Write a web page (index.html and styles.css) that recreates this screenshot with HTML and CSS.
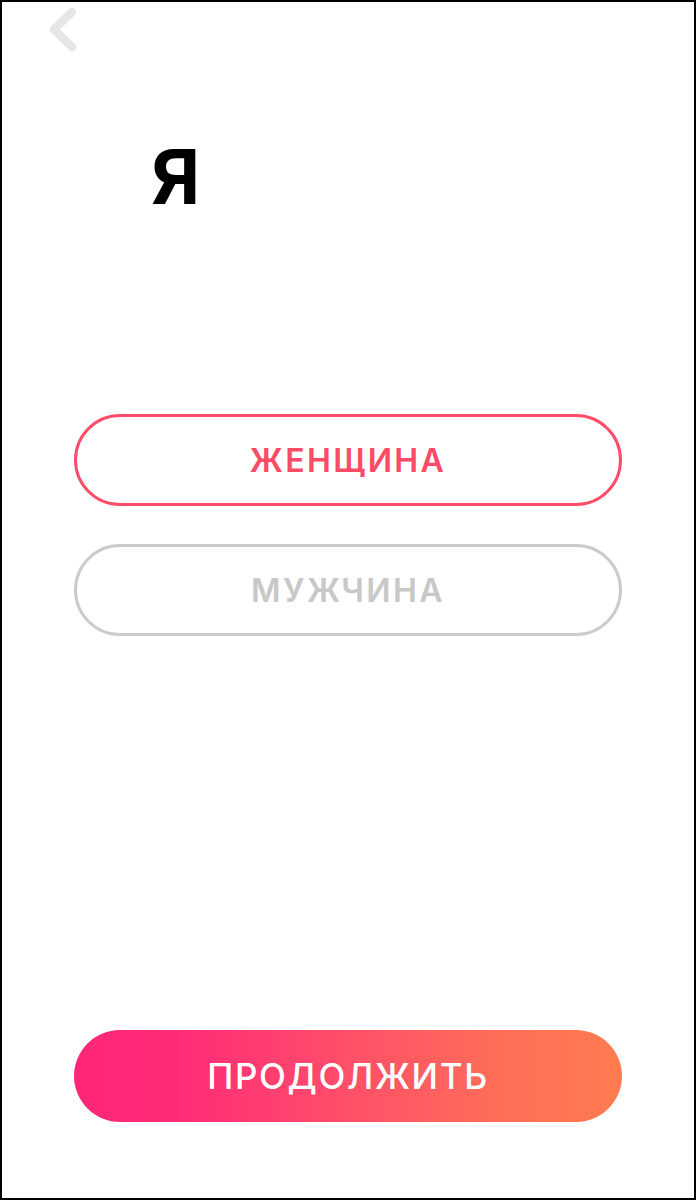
FILE: index.html
```html
<!DOCTYPE html>
<html lang="ru">
<head>
<meta charset="utf-8">
<title>Я</title>
<link rel="stylesheet" href="styles.css">
</head>
<body>
<div class="screen">
  <div class="topbar">
    <svg class="back" width="40" height="56" viewBox="0 0 40 56" aria-label="Назад">
      <path d="M32 10 L14 27.5 L32 45" fill="none" stroke="#e6e6e6" stroke-width="8.5" stroke-linecap="round" stroke-linejoin="round"/>
    </svg>
  </div>
  <h1 class="title">Я</h1>
  <div class="options">
    <button class="option option-active">ЖЕНЩИНА</button>
    <button class="option">МУЖЧИНА</button>
  </div>
  <div class="spacer"></div>
  <button class="continue">ПРОДОЛЖИТЬ</button>
</div>
</body>
</html>
```
FILE: styles.css
```css
html, body {
  margin: 0;
  padding: 0;
  background: #fff;
}
.screen {
  box-sizing: border-box;
  width: 696px;
  height: 1200px;
  border: 2px solid #000;
  display: flex;
  flex-direction: column;
  font-family: Inter, "Noto Sans", sans-serif;
  padding: 0 72px 76px 72px;
}
.topbar {
  height: 60px;
  display: flex;
  align-items: flex-start;
}
.back {
  margin: 0 0 0 -34px;
  display: block;
}
.title {
  margin: 76px 0 0 77px;
  font-size: 75px;
  font-weight: 700;
  line-height: 78px;
  color: #000;
}
.options {
  margin-top: 198px;
  display: flex;
  flex-direction: column;
  gap: 38px;
}
.option {
  height: 92px;
  border-radius: 46px;
  border: 3px solid #cbcbcb;
  background: #fff;
  color: #c8c8c8;
  font-family: Inter, "Noto Sans", sans-serif;
  font-size: 32px;
  font-weight: 600;
  letter-spacing: 2.4px;
  padding: 0;
}
.option-active {
  border-color: #fd4d69;
  color: #fd4a66;
}
.spacer {
  flex: 1;
}
.continue {
  height: 92px;
  border: none;
  border-radius: 46px;
  background: linear-gradient(90deg, #ff2679 0%, #ff2a78 18%, #ff4f69 50%, #ff6e58 78%, #ff7b50 100%);
  color: #fff;
  font-family: Inter, "Noto Sans", sans-serif;
  font-size: 35px;
  font-weight: 500;
  letter-spacing: 1.7px;
  padding: 0;
}
```
